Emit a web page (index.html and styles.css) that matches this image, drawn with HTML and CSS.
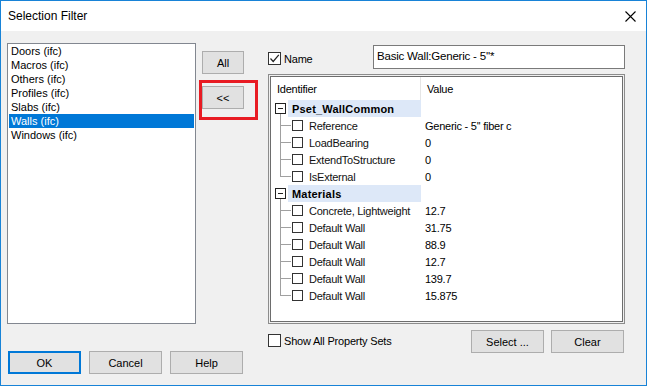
FILE: index.html
```html
<!DOCTYPE html>
<html lang="en">
<head>
<meta charset="UTF-8">
<title>Selection Filter</title>
<link rel="stylesheet" href="styles.css">
</head>
<body>

<div class="window">
  <div class="titlebar">
    <span class="title">Selection Filter</span>
    <svg class="close" width="11" height="11" viewBox="0 0 11 11">
      <path d="M0.5 0.5 L10.5 10.5 M10.5 0.5 L0.5 10.5" stroke="#000" stroke-width="1.1" fill="none"/>
    </svg>
  </div>

  <div class="content">
    <div class="left">
      <div class="top-row">
        <ul class="listbox">
          <li>Doors (ifc)</li>
          <li>Macros (ifc)</li>
          <li>Others (ifc)</li>
          <li>Profiles (ifc)</li>
          <li>Slabs (ifc)</li>
          <li class="selected">Walls (ifc)</li>
          <li>Windows (ifc)</li>
        </ul>
        <div class="mid">
          <button class="btn small">All</button>
          <div class="mark"><button class="btn small">&lt;&lt;</button></div>
        </div>
      </div>
      <div class="dlg-buttons">
        <button class="btn default">OK</button>
        <button class="btn">Cancel</button>
        <button class="btn">Help</button>
      </div>
    </div>

    <div class="right">
      <div class="name-row">
        <label class="check">
          <span class="cb big">
            <svg width="11" height="11" viewBox="0 0 11 11"><path d="M1.5 5.5 L4.2 8.5 L9.8 1.8" stroke="#222" stroke-width="1.2" fill="none"/></svg>
          </span>
          Name
        </label>
        <div class="textbox">Basic Wall:Generic - 5''*</div>
      </div>

      <div class="tree">
        <div class="tree-inner">
          <div class="row head">
            <div class="col-id">Identifier</div>
            <div class="col-val">Value</div>
          </div>

          <div class="row group">
            <div class="col-id"><span class="toggle-zone"><span class="toggle"></span></span><span class="group-label">Pset_WallCommon</span></div>
            <div class="col-val"></div>
          </div>
          <div class="row">
            <div class="col-id"><span class="twig"></span><span class="cb"></span><span class="label">Reference</span></div>
            <div class="col-val">Generic - 5'' fiber c</div>
          </div>
          <div class="row">
            <div class="col-id"><span class="twig"></span><span class="cb"></span><span class="label">LoadBearing</span></div>
            <div class="col-val">0</div>
          </div>
          <div class="row">
            <div class="col-id"><span class="twig"></span><span class="cb"></span><span class="label">ExtendToStructure</span></div>
            <div class="col-val">0</div>
          </div>
          <div class="row">
            <div class="col-id"><span class="twig last"></span><span class="cb"></span><span class="label">IsExternal</span></div>
            <div class="col-val">0</div>
          </div>

          <div class="row group">
            <div class="col-id"><span class="toggle-zone"><span class="toggle"></span></span><span class="group-label">Materials</span></div>
            <div class="col-val"></div>
          </div>
          <div class="row">
            <div class="col-id"><span class="twig"></span><span class="cb"></span><span class="label">Concrete, Lightweight</span></div>
            <div class="col-val">12.7</div>
          </div>
          <div class="row">
            <div class="col-id"><span class="twig"></span><span class="cb"></span><span class="label">Default Wall</span></div>
            <div class="col-val">31.75</div>
          </div>
          <div class="row">
            <div class="col-id"><span class="twig"></span><span class="cb"></span><span class="label">Default Wall</span></div>
            <div class="col-val">88.9</div>
          </div>
          <div class="row">
            <div class="col-id"><span class="twig"></span><span class="cb"></span><span class="label">Default Wall</span></div>
            <div class="col-val">12.7</div>
          </div>
          <div class="row">
            <div class="col-id"><span class="twig"></span><span class="cb"></span><span class="label">Default Wall</span></div>
            <div class="col-val">139.7</div>
          </div>
          <div class="row">
            <div class="col-id"><span class="twig last"></span><span class="cb"></span><span class="label">Default Wall</span></div>
            <div class="col-val">15.875</div>
          </div>
        </div>
      </div>

      <div class="foot">
        <label class="check"><span class="cb big"></span>Show All Property Sets</label>
        <div class="foot-buttons">
          <button class="btn">Select ...</button>
          <button class="btn">Clear</button>
        </div>
      </div>
    </div>
  </div>
</div>

</body>
</html>
```

FILE: styles.css
```css
* { box-sizing: border-box; }

body {
    margin: 0;
    font-family: "Liberation Sans", Arial, sans-serif;
    font-size: 11px;
    color: #000;
}

.window {
    width: 647px;
    height: 386px;
    border: 1px solid #1883d7;
    display: flex;
    flex-direction: column;
    background: #f0f0f0;
}

.titlebar {
    height: 30px;
    background: #fff;
    display: flex;
    align-items: center;
    justify-content: space-between;
    padding: 0 10px 0 7px;
}
.title { font-size: 12px; }
.close { display: block; }

.content {
    flex: 1;
    display: flex;
    padding: 12px 0 0 6px;
}

/* left side */
.left { width: 261px; }
.top-row { display: flex; }

.listbox {
    list-style: none;
    margin: 0;
    padding: 0 1px;
    width: 189px;
    height: 281px;
    background: #fff;
    border: 1px solid #828790;
}
.listbox li {
    height: 14px;
    line-height: 14px;
    padding-left: 2px;
}
.listbox li.selected { background: #0078d7; color: #fff; }

.mid {
    margin-left: 6px;
    padding-top: 8px;
    display: flex;
    flex-direction: column;
    gap: 12px;
}

.btn {
    font-family: inherit;
    font-size: 11px;
    color: #000;
    background: #e1e1e1;
    border: 1px solid #adadad;
    width: 73px;
    height: 23px;
    padding: 0;
    margin: 0;
}
.btn.small { width: 42px; }
.btn.default { border: 2px solid #0078d7; }

.mark { position: relative; }
.mark::after {
    content: "";
    position: absolute;
    top: -6px;
    left: -3px;
    width: 53px;
    height: 34px;
    border: 3px solid #e81b23;
}

.dlg-buttons {
    display: flex;
    gap: 8px;
    margin: 27px 0 0 1px;
}

/* right side */
.right {
    width: 357px;
    margin-top: 2px;
}

.name-row {
    display: flex;
    justify-content: space-between;
    height: 24px;
}
.name-row .check { margin-top: 7px; }

.check {
    display: flex;
    align-items: center;
    gap: 3px;
    height: 13px;
    letter-spacing: -0.2px;
}

.cb {
    display: inline-flex;
    flex: none;
    width: 11px;
    height: 11px;
    background: #fff;
    border: 1px solid #333;
}
.cb.big { width: 13px; height: 13px; }
.cb svg { display: block; margin: 0; }

.textbox {
    width: 252px;
    height: 24px;
    background: #fff;
    border: 1px solid #7a7a7a;
    padding: 4px 0 0 3px;
    font-size: 11.5px;
    letter-spacing: -0.2px;
}

.tree {
    margin-top: 5px;
    height: 250px;
    border: 1px solid #8c8c8c;
    padding: 1px;
}
.tree-inner {
    height: 100%;
    background: #fff;
    border: 1px solid #6d6d6d;
    letter-spacing: -0.25px;
}

.row {
    display: flex;
    height: 17px;
    align-items: stretch;
}
.row .col-id {
    width: 150px;
    display: flex;
    align-items: center;
}
.row .col-val {
    flex: 1;
    display: flex;
    align-items: center;
    padding-left: 4px;
}

.row.head { height: 23px; }
.row.head .col-id { padding-left: 6px; border-right: 1px solid #e5e5e5; }
.row.head .col-val { padding-left: 6px; }

.toggle-zone {
    width: 17px;
    height: 17px;
    display: flex;
    align-items: center;
    padding-left: 4px;
    background: linear-gradient(#a0a0a0, #a0a0a0) 9px 13px / 1px 4px no-repeat;
}
.toggle {
    width: 11px;
    height: 11px;
    border: 1px solid #222;
    background: #fff linear-gradient(#222, #222) center / 5px 1px no-repeat;
}

.group-label {
    flex: 1;
    height: 100%;
    display: flex;
    align-items: center;
    padding-left: 4px;
    background: #dde8f8;
    font-weight: bold;
    letter-spacing: 0.2px;
}

.twig {
    width: 11px;
    height: 17px;
    margin: 0 1px 0 9px;
    background:
        linear-gradient(#a0a0a0, #a0a0a0) 0 0 / 1px 100% no-repeat,
        linear-gradient(#a0a0a0, #a0a0a0) 0 8px / 100% 1px no-repeat;
}
.twig.last {
    background:
        linear-gradient(#a0a0a0, #a0a0a0) 0 0 / 1px 9px no-repeat,
        linear-gradient(#a0a0a0, #a0a0a0) 0 8px / 100% 1px no-repeat;
}
.label { margin-left: 6px; color: #111; }

.foot {
    margin-top: 6px;
    display: flex;
    justify-content: space-between;
}
.foot .check { margin-top: 4px; }
.foot-buttons {
    display: flex;
    gap: 7px;
    margin-right: 1px;
}
```
